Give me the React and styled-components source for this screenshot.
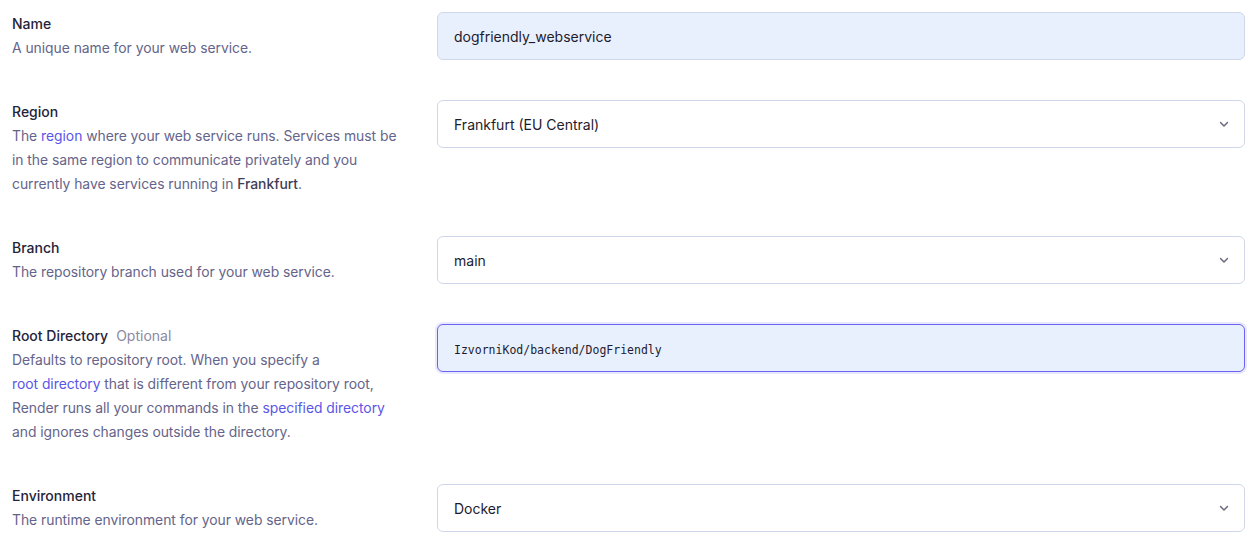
import React from "react";
import styled, { createGlobalStyle } from "styled-components";

const GlobalStyle = createGlobalStyle`
  body {
    margin: 0;
    background: #ffffff;
    font-family: Inter, "Noto Sans", sans-serif;
  }
`;

const Form = styled.div`
  display: flex;
  flex-direction: column;
  gap: 40px;
  padding: 12px 3px 0 12px;
`;

const Row = styled.div`
  display: grid;
  grid-template-columns: 400px 1fr;
  column-gap: 25px;
  align-items: start;
`;

const Info = styled.div`
  font-size: 14px;
  line-height: 24px;
  white-space: nowrap;
`;

const Label = styled.div`
  color: #25233a;
  font-weight: 500;
`;

const Optional = styled.span`
  color: #8a89a3;
  font-weight: 400;
  margin-left: 8px;
`;

const Desc = styled.div`
  color: #65648a;
  font-size: 13.9px;
  letter-spacing: -0.04px;
`;

const Link = styled.a`
  color: #5a55e8;
  text-decoration: none;
`;

const Strong = styled.span`
  color: #3f3d56;
  font-weight: 500;
`;

const Field = styled.div`
  position: relative;
  box-sizing: border-box;
  height: 48px;
  display: flex;
  align-items: center;
  padding: ${(p) => (p.mono ? "3px 16px 0" : "0 16px")};
  border-radius: 6px;
  border: 1px solid ${(p) => (p.focused ? "#6c63f0" : "#cfd8ea")};
  background: ${(p) => (p.filled ? "#e8f0fe" : "#ffffff")};
  box-shadow: ${(p) => (p.focused ? "0 0 0 2px rgba(108, 99, 240, 0.15)" : "none")};
  color: #1d1b2e;
  font-size: ${(p) => (p.mono ? "11.5px" : "14px")};
  font-family: ${(p) => (p.mono ? '"DejaVu Sans Mono", "Liberation Mono", monospace' : 'Inter, "Noto Sans", sans-serif')};
`;

const Chevron = styled.svg`
  position: absolute;
  right: 14px;
  top: 50%;
  margin-top: -6px;
  width: 12px;
  height: 12px;
`;

const Select = ({ children }) => (
  <Field>
    {children}
    <Chevron viewBox="0 0 12 12" fill="none">
      <path d="M2.5 4.5 L6 8 L9.5 4.5" stroke="#6b6a80" strokeWidth="1.5" strokeLinecap="round" strokeLinejoin="round" />
    </Chevron>
  </Field>
);

export default function App() {
  return (
    <>
      <GlobalStyle />
      <Form>
        <Row>
          <Info>
            <Label>Name</Label>
            <Desc>A unique name for your web service.</Desc>
          </Info>
          <Field filled>dogfriendly_webservice</Field>
        </Row>
        <Row>
          <Info>
            <Label>Region</Label>
            <Desc>
              The <Link href="#">region</Link> where your web service runs. Services must be
              <br />
              in the same region to communicate privately and you
              <br />
              currently have services running in <Strong>Frankfurt</Strong>.
            </Desc>
          </Info>
          <Select>Frankfurt (EU Central)</Select>
        </Row>
        <Row>
          <Info>
            <Label>Branch</Label>
            <Desc>The repository branch used for your web service.</Desc>
          </Info>
          <Select>main</Select>
        </Row>
        <Row>
          <Info>
            <Label>
              Root Directory<Optional>Optional</Optional>
            </Label>
            <Desc>
              Defaults to repository root. When you specify a
              <br />
              <Link href="#">root directory</Link> that is different from your repository root,
              <br />
              Render runs all your commands in the <Link href="#">specified directory</Link>
              <br />
              and ignores changes outside the directory.
            </Desc>
          </Info>
          <Field filled focused mono>
            IzvorniKod/backend/DogFriendly
          </Field>
        </Row>
        <Row>
          <Info>
            <Label>Environment</Label>
            <Desc>The runtime environment for your web service.</Desc>
          </Info>
          <Select>Docker</Select>
        </Row>
      </Form>
    </>
  );
}
